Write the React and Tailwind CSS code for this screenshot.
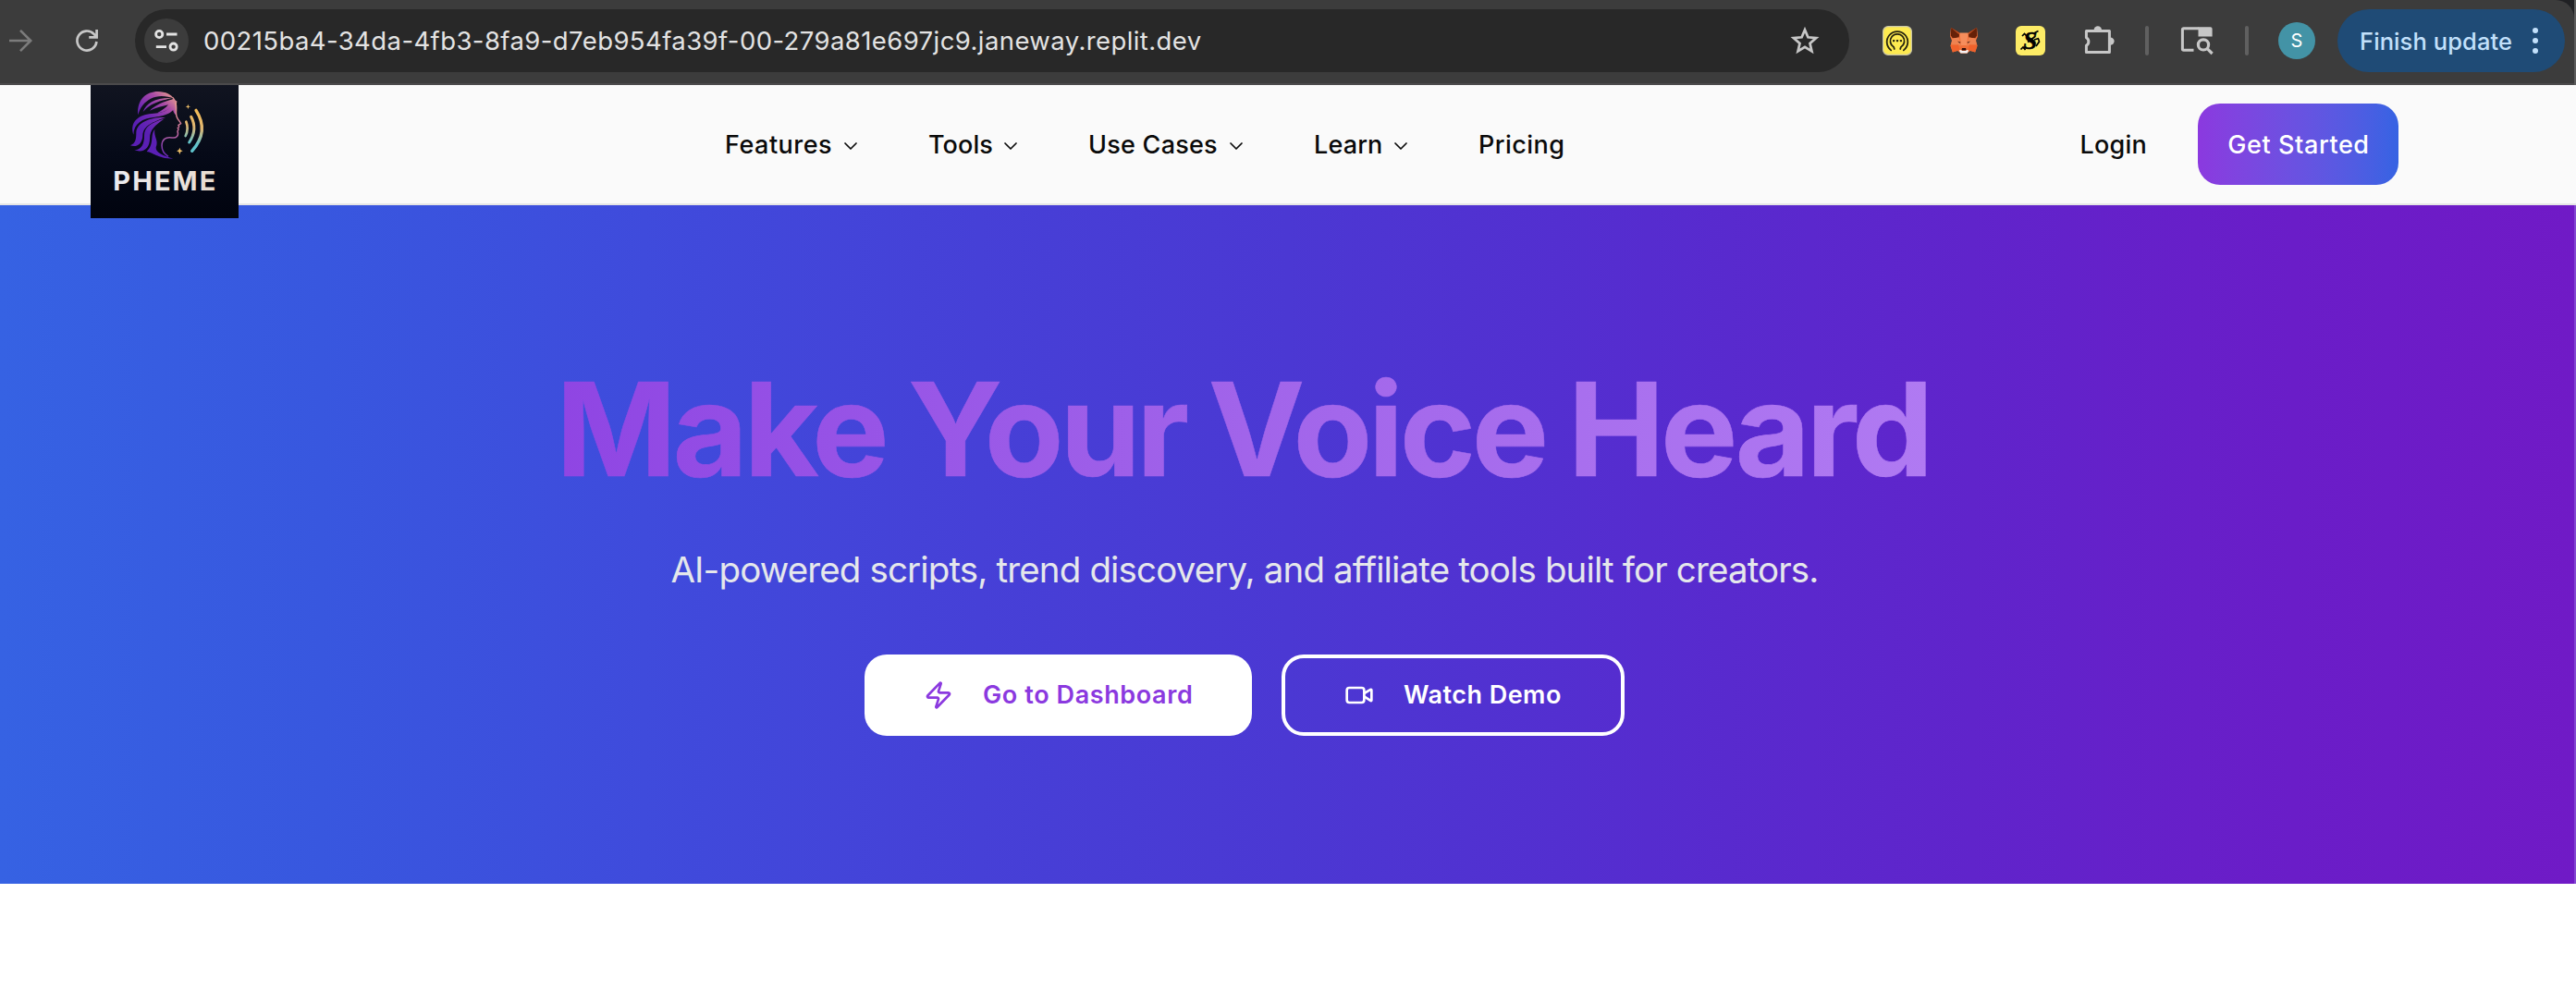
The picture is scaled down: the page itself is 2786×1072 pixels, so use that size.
import React from "react";
import { ChevronDown, Zap, Video } from "lucide-react";

const NAV = [
  { label: "Features", width: "w-[148px]", spacing: "tracking-[0.5px]", menu: true },
  { label: "Tools", width: "w-[101px]", spacing: "tracking-[0.1px]", menu: true },
  { label: "Use Cases", width: "w-[172px]", spacing: "tracking-[0.25px]", menu: true },
  { label: "Learn", width: "w-[106px]", spacing: "tracking-[0.15px]", menu: true },
  { label: "Pricing", width: "w-[96px]", spacing: "tracking-[0.45px]", menu: false },
];

function ForwardIcon() {
  return (
    <svg className="h-8 w-8 shrink-0" viewBox="0 0 32 32" fill="none" stroke="#7c7c7c" strokeWidth="2.6">
      <path d="M4 16h23M16 4.8 27.2 16 16 27.2" />
    </svg>
  );
}

function ReloadIcon() {
  return (
    <svg className="h-8 w-8 shrink-0" viewBox="0 0 32 32" fill="none" stroke="#c7c7c7" strokeWidth="2.7">
      <path d="M26.4 17A10.5 10.5 0 1 1 23.6 8.8L26 11.2" />
      <path d="M26.6 4v8.4H18.2" />
      <path d="M22 12.4h5V8z" fill="#c7c7c7" stroke="none" />
    </svg>
  );
}

function SiteSettingsIcon() {
  return (
    <svg className="h-8 w-8" viewBox="0 0 32 32" fill="none" stroke="#e3e3e3" strokeWidth="2.8">
      <circle cx="8.2" cy="9" r="3.6" />
      <path d="M16 9h11.5M4.8 22.6H16" />
      <circle cx="23.6" cy="22.6" r="3.6" />
    </svg>
  );
}

function StarIcon() {
  return (
    <svg className="h-8 w-8" viewBox="0 0 32 32" fill="none" stroke="#c7c7c7" strokeWidth="2.7">
      <path d="M16 4.2l3.4 8.1 8.8.8-6.7 5.8 2 8.6-7.5-4.6-7.5 4.6 2-8.6-6.7-5.8 8.8-.8z" />
    </svg>
  );
}

function HeadsetExtension() {
  return (
    <svg className="h-8 w-8 shrink-0" viewBox="0 0 32 32" fill="none">
      <rect x="0.6" y="0.6" width="30.8" height="30.8" rx="5.5" fill="#fdea50" stroke="#c9c5a8" strokeWidth="1.2" />
      <g stroke="#26240f" strokeWidth="1.8" strokeLinecap="round">
        <path d="M9.200 26.400A11.300 11.300 0 1 1 22.800 26.400" />
        <path d="M12.200 23A7.600 7.600 0 1 1 19.800 23L19.200 25M12.200 23 12.800 25" />
      </g>
      <g fill="#26240f">
        <rect x="11" y="15" width="2.2" height="2.2" rx=".6" />
        <rect x="14.9" y="15" width="2.2" height="2.2" rx=".6" />
        <rect x="18.8" y="15" width="2.2" height="2.2" rx=".6" />
      </g>
    </svg>
  );
}

function FoxExtension() {
  return (
    <svg className="h-8 w-8 shrink-0" viewBox="0 0 32 32">
      <path d="M2 2 11 8h10L30 2l1 9-2 5 1.6 5.4-2.4 7-5.4-1.4-3.6 2.8h-6.4L9.200 27 3.800 28.400 1.400 21.400 3 16 1 11z" fill="#f0703a" />
      <path d="M2.200 2 11.400 7.600 10.600 12.500 4 13.400 1.800 10.500z" fill="#662108" />
      <path d="M29.800 2 20.600 7.600 21.400 12.500 28 13.400 30.200 10.500z" fill="#662108" />
      <path d="M2.200 2 11.400 7.600 11 9.500z" fill="#c5501f" />
      <path d="M29.800 2 20.600 7.600 21 9.500z" fill="#c5501f" />
      <path d="M11.400 7.600h9.200L19 21h-6z" fill="#f68d5c" />
      <path d="M10.600 12.500 3.400 13.600 2.400 20 10 20.500 13 22z" fill="#ee8250" />
      <path d="M21.400 12.500 28.600 13.600 29.600 20 22 20.500 19 22z" fill="#ee8250" />
      <path d="M1.600 21 10 20.500 11.500 26 3.800 28.400z" fill="#f0622c" />
      <path d="M30.400 21 22 20.500 20.500 26 28.200 28.400z" fill="#f0622c" />
      <path d="M9 16.600 12.600 17.800 11.500 18.800z" fill="#3a1a14" />
      <path d="M23 16.600 19.400 17.800 20.500 18.800z" fill="#3a1a14" />
      <path d="M14 24h4l.6 2.400h-5.200z" fill="#34100c" />
      <path d="M10.800 26.400 13 26l1 1h4l1-1 2.200.4-1.600 3.200h-7.200z" fill="#f3f3f5" />
    </svg>
  );
}

function ScriptExtension() {
  return (
    <svg className="h-8 w-8 shrink-0" viewBox="0 0 32 32">
      <rect width="32" height="32" rx="6" fill="#fdec66" />
      <text
        x="8.2"
        y="25"
        fontFamily="Liberation Serif, serif"
        fontWeight="700"
        fontStyle="italic"
        fontSize="27"
        stroke="#000"
        strokeWidth="0.5"
      >
        S
      </text>
      <path
        d="M7 11 9.500 8.500 12 11M5.500 25.500 8 23 10.500 26M20 15 25 13.500M20.500 7.500 24.500 5.500M21 11.500 13 17.500M24.500 14 25.500 17 22 22"
        fill="none"
        stroke="#000"
        strokeWidth="1.700"
      />
    </svg>
  );
}

function PuzzleIcon() {
  return (
    <svg className="h-9 w-9 shrink-0" viewBox="0 0 36 36">
      <path
        d="M4.400 7.500H29.400V30.600H4.400V23.400a5 5 0 0 0 0-8.600z"
        fill="none"
        stroke="#c7c7c7"
        strokeWidth="3"
        strokeLinejoin="round"
      />
      <path d="M12.600 6.500a4.200 4.200 0 0 1 8.400 0z" fill="#c7c7c7" />
      <path d="M30.400 14.400a4.200 4.200 0 0 1 0 8.400z" fill="#c7c7c7" />
    </svg>
  );
}

function TabSearchIcon() {
  return (
    <svg className="h-9 w-9 shrink-0" viewBox="0 0 36 36" fill="none" stroke="#c7c7c7">
      <path d="M14.500 28.200H3.600a1.200 1.200 0 0 1-1.200-1.200V6a1.200 1.200 0 0 1 1.200-1.200H20" strokeWidth="3" />
      <path d="M19.500 3.200H32.600a2 2 0 0 1 2 2v8.200H19.500z" fill="#c7c7c7" stroke="none" />
      <circle cx="25" cy="22.400" r="5.600" strokeWidth="3.200" />
      <path d="M29.200 26.600 34.600 32" strokeWidth="3.200" />
    </svg>
  );
}

function Toolbar() {
  return (
    <div className="h-[92px] border-r-2 border-[#5c5c5c] bg-[#202124]">
      <div className="flex h-[92px] items-start rounded-tr-[20px] border-b-2 border-[#4b4a4b] bg-[#3c3c3c]">
        <div className="flex h-[88px] w-full items-center">
          <div className="ml-[6px] flex">
            <ForwardIcon />
          </div>
          <div className="ml-10 flex">
            <ReloadIcon />
          </div>
          <div className="ml-9 flex h-[68px] w-[1854px] items-center rounded-full bg-[#282828]">
            <div className="ml-[10px] flex h-12 w-12 items-center justify-center rounded-full bg-[#3c3c3c]">
              <SiteSettingsIcon />
            </div>
            <span className="mt-0.5 ml-4 text-[27.5px] tracking-[0.41px] whitespace-nowrap text-[#e3e3e3]">
              00215ba4-34da-4fb3-8fa9-d7eb954fa39f-00-279a81e697jc9.janeway.replit.dev
            </span>
            <div className="mr-8 ml-auto flex">
              <StarIcon />
            </div>
          </div>
          <div className="ml-9 flex">
            <HeadsetExtension />
          </div>
          <div className="ml-10 flex">
            <FoxExtension />
          </div>
          <div className="ml-10 flex">
            <ScriptExtension />
          </div>
          <div className="ml-10 flex">
            <PuzzleIcon />
          </div>
          <div className="ml-8 h-8 w-1 rounded-full bg-[#606060]" />
          <div className="ml-[34px] flex">
            <TabSearchIcon />
          </div>
          <div className="ml-[34px] h-8 w-1 rounded-full bg-[#606060]" />
          <div className="ml-8 flex h-10 w-10 items-center justify-center rounded-full bg-[#4393a6] text-[20px] text-white">
            S
          </div>
          <div className="ml-6 flex h-[68px] w-[246px] items-center rounded-full bg-[#1f4b76] text-[#c2e0fb]">
            <span className="mt-0.5 ml-6 text-[25.5px] font-medium tracking-[0.1px] whitespace-nowrap">Finish update</span>
            <svg className="mr-[26px] ml-auto h-8 w-3" viewBox="0 0 12 32" fill="currentColor">
              <circle cx="6" cy="4.9" r="3" />
              <circle cx="6" cy="16" r="3" />
              <circle cx="6" cy="27.1" r="3" />
            </svg>
          </div>
        </div>
      </div>
    </div>
  );
}

function Logo() {
  return (
    <div className="absolute top-0 left-[98px] z-10 h-[144px] w-[160px] bg-linear-to-b from-[#111420] via-[#060a18] to-[#01040f]">
      <svg className="h-[144px] w-[160px]" viewBox="54 36 480 432" fill="none">
        <defs>
          <linearGradient id="hair" gradientUnits="userSpaceOnUse" x1="335" y1="75" x2="235" y2="190">
            <stop offset="0" stopColor="#e9a08c" />
            <stop offset="0.3" stopColor="#a94aa6" />
            <stop offset="0.65" stopColor="#7229b4" />
            <stop offset="1" stopColor="#5a1fb4" />
          </linearGradient>
          <linearGradient id="face" gradientUnits="userSpaceOnUse" x1="330" y1="80" x2="295" y2="270">
            <stop offset="0" stopColor="#eba58c" />
            <stop offset="0.5" stopColor="#c8719a" />
            <stop offset="1" stopColor="#6524b6" />
          </linearGradient>
          <linearGradient id="wave" gradientUnits="userSpaceOnUse" x1="400" y1="120" x2="370" y2="250">
            <stop offset="0" stopColor="#f2bb57" />
            <stop offset="0.4" stopColor="#dfb673" />
            <stop offset="0.8" stopColor="#5fc3cc" />
          </linearGradient>
          <linearGradient id="wordmark" x1="0" x2="1">
            <stop offset="0" stopColor="#ebecf1" />
            <stop offset="1" stopColor="#e9dccf" />
          </linearGradient>
        </defs>
        <g fill="url(#hair)">
          <path d="M208 133C203 82 236 57 272 57C298 57 316 68 325 80C300 70 272 68 249 80C228 91 214 109 208 133Z" />
          <path d="M224 123C234 94 266 76 318 78C292 84 262 92 245 104C236 110 230 116 224 123Z" />
          <path d="M246 119C262 102 290 90 322 82C326 108 300 124 270 127C284 119 298 110 306 100C288 104 266 110 246 119Z" />
          <path d="M193 197C181 160 204 136 244 130C286 126 316 122 321 84L334 88C334 122 300 136 262 140C222 144 194 160 193 197Z" />
          <path d="M297 141C252 139 203 156 202 190C202 212 200 226 183 232C206 240 222 224 223 200C224 168 256 156 297 141Z" />
          <path d="M292 146C252 156 227 172 228 200C228 226 220 246 196 247C226 258 246 240 246 210C246 180 262 168 292 146Z" />
          <path d="M262 180C246 200 262 226 236 252C258 254 268 274 322 275C292 266 264 256 266 238C276 216 258 204 262 180Z" />
          <path d="M321 74C336 88 336 112 331 134C322 126 316 110 321 74Z" />
        </g>
        <path
          d="M330 92C333 112 329 130 334 140C337 149 347 158 347 161L339 166C342 170 341 173 337 175C341 180 338 183 336 186C341 200 333 209 318 207C296 203 286 214 285 232C285 250 296 262 306 268"
          stroke="url(#face)"
          strokeWidth="4.500"
        />
        <g stroke="url(#wave)" strokeLinecap="round">
          <path d="M364 155Q373 178 362 201" strokeWidth="8" />
          <path d="M380 139Q402 180 374 222" strokeWidth="9" />
          <path d="M396 118Q440 186 383 250" strokeWidth="10" />
        </g>
        <g fill="#eebf68">
          <path d="M370 98l2 6 6 2-6 2-2 6-2-6-6-2 6-2z" />
          <path d="M343 239l3 8 7 3-7 3-3 8-3-8-7-3 7-3z" />
        </g>
        <text
          x="127"
          y="376.5"
          fill="url(#wordmark)"
          fontFamily="Inter, sans-serif"
          fontWeight="700"
          fontSize="87"
          textLength="333"
        >
          PHEME
        </text>
      </svg>
    </div>
  );
}

function Header() {
  return (
    <header className="relative flex h-[130px] items-center border-b-2 border-[#e5e5e5] bg-[#fafafa] text-[27px] font-medium text-[#0a0a0a]">
      <Logo />
      <nav className="mt-0.5 ml-[784px] flex gap-x-[72px]">
        {NAV.map((item) => (
          <a key={item.label} className={"flex items-center justify-between whitespace-nowrap " + item.width}>
            <span className={item.spacing}>{item.label}</span>
            {item.menu && <ChevronDown className="mt-0.5 h-6 w-6" strokeWidth={1.75} />}
          </a>
        ))}
      </nav>
      <div className="mr-[192px] ml-auto flex items-center">
        <a className="mt-0.5 tracking-[0.25px]">Login</a>
        <button className="ml-[55px] h-[88px] w-[217px] rounded-3xl bg-linear-to-r from-[#8b39df] to-[#3563e3] pt-0.5 pl-px tracking-[0.58px] text-white">
          Get Started
        </button>
      </div>
    </header>
  );
}

function Hero() {
  return (
    <section className="h-[734px] border-r-2 border-[#8446d2] bg-[linear-gradient(to_right,#3662e3_0%,#3857df_12.5%,#3f4bdc_25%,#4640d7_38%,#4b38d3_50%,#562ccf_64%,#6024cb_76.5%,#6a1dc8_89%,#701ac6_100%)] bg-origin-border">
      <div className="flex w-[2692px] flex-col items-center pt-[158px]">
        <h1 className="bg-linear-to-r from-[#8f45e3] via-[#a164ea] to-[#b07af2] bg-clip-text pr-1 text-[140px] leading-[168px] font-bold tracking-[-4.3px] whitespace-nowrap text-transparent [-webkit-text-stroke:0.6px_transparent] [word-spacing:-4px]">
          Make Your Voice Heard
        </h1>
        <p className="mt-10 text-[38.5px] leading-[56px] tracking-[-0.86px] whitespace-nowrap text-[#e5e7eb]">
          AI-powered scripts, trend discovery, and affiliate tools built for creators.
        </p>
        <div className="mt-16 flex gap-8 text-[27px] font-semibold">
          <button className="flex h-[88px] w-[419px] items-center rounded-3xl bg-white pl-16 tracking-[0.6px] whitespace-nowrap text-[#8b39df]">
            <Zap className="h-8 w-8" />
            <span className="ml-8">Go to Dashboard</span>
          </button>
          <button className="flex h-[88px] w-[371px] items-center rounded-3xl border-4 border-white pl-16 tracking-[0.47px] whitespace-nowrap text-white">
            <Video className="h-8 w-8" />
            <span className="ml-8">Watch Demo</span>
          </button>
        </div>
      </div>
    </section>
  );
}

export default function App() {
  return (
    <div className="h-[1072px] w-full overflow-hidden bg-white [font-family:Inter,'Liberation_Sans',sans-serif]">
      <Toolbar />
      <Header />
      <Hero />
    </div>
  );
}
